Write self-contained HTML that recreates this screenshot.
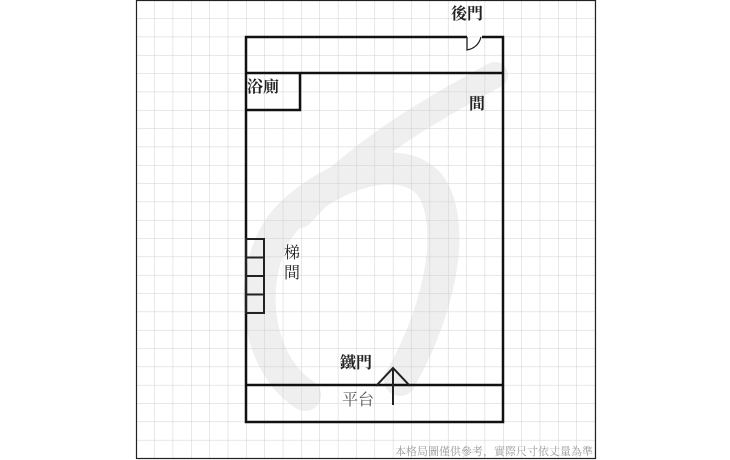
<!DOCTYPE html>
<html><head><meta charset="utf-8"><style>
html,body{margin:0;padding:0;background:#fff;}
svg{display:block;}
text{font-family:"Liberation Serif","Noto Serif CJK SC","Noto Sans CJK TC",serif;}
</style></head><body>
<svg width="730" height="460" viewBox="0 0 730 460" xmlns="http://www.w3.org/2000/svg">
<defs>
<pattern id="g" x="136" y="0" width="18.35" height="18.33" patternUnits="userSpaceOnUse">
<path d="M0 0 V18.33 M0 0 H18.35" stroke="#cfcfcf" stroke-width="1" fill="none"/>
</pattern>
</defs>
<!-- watermark under grid -->
<g fill="none" stroke="#efefef" stroke-linecap="round">
<path d="M305 395 C 250 360, 245 260, 290 215 C 330 175, 400 150, 430 185 C 455 220, 445 300, 400 380" stroke-width="32"/>
<path d="M300 215 C 360 150, 430 110, 495 75" stroke-width="26"/>
</g>
<polygon points="470,80 500,70 488,95" fill="#efefef"/>
<rect x="136" y="0" width="460" height="459" fill="url(#g)"/>
<rect x="136.5" y="0.5" width="459" height="458" fill="none" stroke="#222" stroke-width="1.2"/>
<!-- walls -->
<g stroke="#111" stroke-width="2.5" fill="none">
<path d="M467 37 H246 V422 H503 V37 H482"/>
<path d="M246 73 H503"/>
<path d="M300 73 V110 H246"/>
<path d="M246 385 H503"/>
</g>
<g stroke="#222" stroke-width="2" fill="none">
<rect x="246" y="239" width="18" height="18.5"/>
<rect x="246" y="257.5" width="18" height="18.5"/>
<rect x="246" y="276" width="18" height="18.5"/>
<rect x="246" y="294.5" width="18" height="18.5"/>
</g>
<path d="M467 37 V50 Q478 48 481 37" stroke="#222" stroke-width="1.3" fill="none"/>
<path d="M393 405 V368 M376 386 L393 368 L410 386" stroke="#222" stroke-width="2" fill="none"/>
<g font-size="16" fill="#222">
<text x="451" y="19" font-weight="bold">後門</text>
<text x="247" y="92" font-weight="bold">浴廁</text>
<text x="469" y="109" font-weight="bold">間</text>
<text x="284" y="258">梯</text>
<text x="284" y="278">間</text>
<text x="340" y="368" font-weight="bold">鐵門</text>
<text x="342" y="405" fill="#555">平台</text>
</g>
<text x="593" y="455" font-size="11" fill="#999" text-anchor="end" font-family="'Liberation Sans','Noto Sans CJK TC',sans-serif">本格局圖僅供參考，實際尺寸依丈量為準</text>
</svg>
</body></html>
